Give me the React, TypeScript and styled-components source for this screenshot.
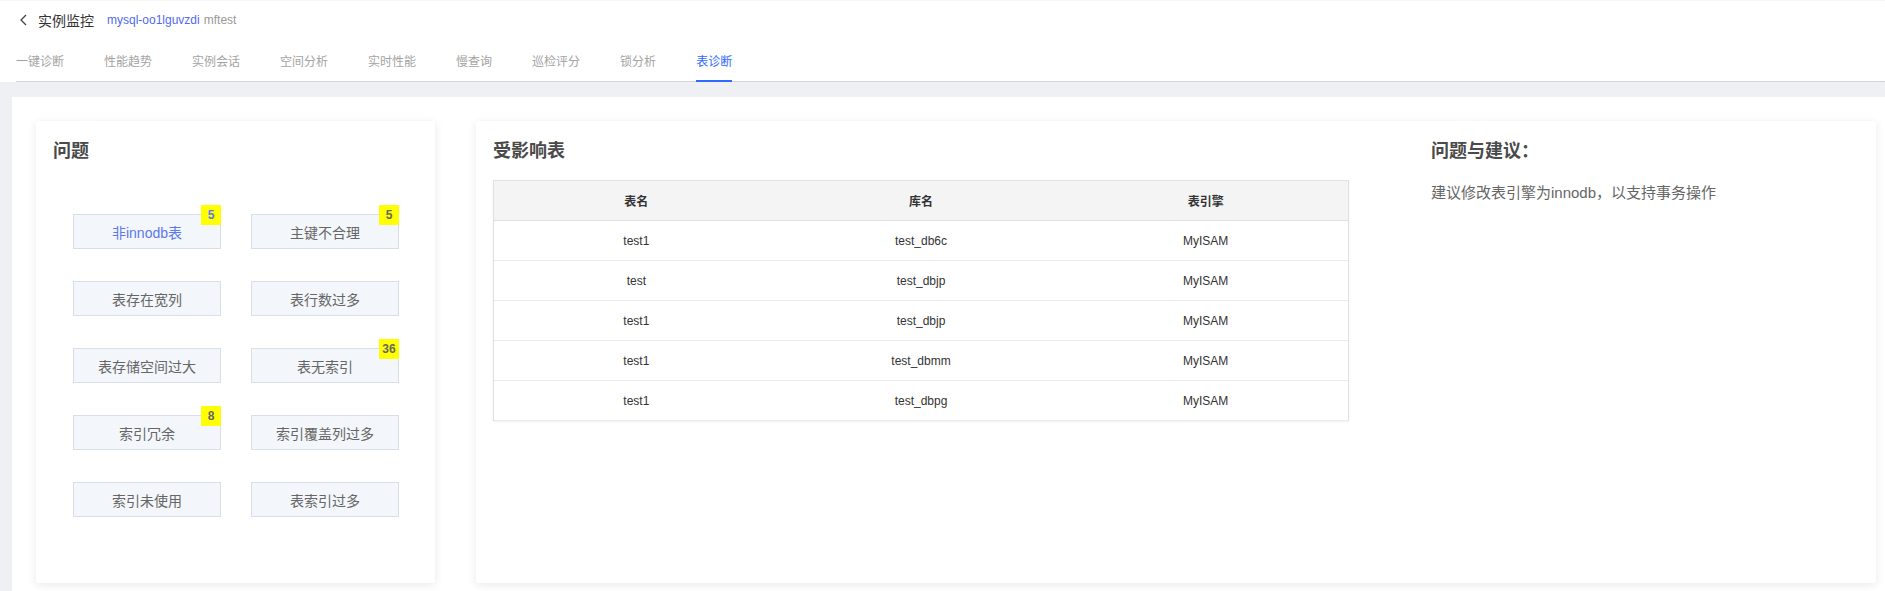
import React from "react";
import styled, { createGlobalStyle } from "styled-components";

const GlobalStyle = createGlobalStyle`
  html, body {
    margin: 0;
    padding: 0;
    background: #eef0f4;
    font-family: "Liberation Sans", Arial, "Noto Sans CJK SC", sans-serif;
  }
  * { box-sizing: border-box; }
`;

const Page = styled.div`
  width: 1885px;
  min-height: 591px;
  display: flex;
  flex-direction: column;
  background: #eef0f4;
`;

const Header = styled.header`
  background: #ffffff;
  box-shadow: inset 0 1px 1px rgba(0, 0, 0, 0.04);
`;

const TitleBar = styled.div`
  height: 40px;
  display: flex;
  align-items: center;
  padding-left: 19px;
`;

const BackButton = styled.span`
  display: inline-flex;
  width: 9px;
  height: 12px;
  margin-right: 10px;
  cursor: pointer;
`;

const PageTitle = styled.span`
  font-size: 14px;
  color: #333333;
  margin-right: 13px;
`;

const Instance = styled.span`
  font-size: 12px;
  color: #5469f2;
`;

const InstanceName = styled.span`
  font-size: 12px;
  color: #999999;
  margin-left: 4px;
`;

const TabBar = styled.nav`
  margin-left: 16px;
  height: 42px;
  display: flex;
  gap: 40px;
  border-bottom: 1px solid #d2d4d8;
`;

const Tab = styled.div<{ $active?: boolean }>`
  position: relative;
  height: 41px;
  display: flex;
  align-items: center;
  font-size: 12px;
  color: ${(p) => (p.$active ? "#2f6bff" : "#a3a3a3")};
  cursor: pointer;
  &::after {
    content: "";
    position: absolute;
    left: 0;
    right: 0;
    bottom: -1px;
    height: 2px;
    background: ${(p) => (p.$active ? "#2f6bff" : "transparent")};
  }
`;

const Content = styled.main`
  flex: 1;
  display: flex;
  padding: 15px 0 0 12px;
`;

const Panel = styled.section`
  flex: 1;
  background: #ffffff;
  display: flex;
  align-items: flex-start;
  gap: 41px;
  padding: 24px 9px 8px 24px;
`;

const Card = styled.div<{ $grow?: boolean }>`
  background: #ffffff;
  box-shadow: 0 2px 10px rgba(0, 0, 0, 0.09);
  border-radius: 2px;
  height: 462px;
  padding: 18px 17px;
  ${(p) => (p.$grow ? "flex: 1;" : "width: 399px;")}
`;

const CardTitle = styled.h2`
  margin: 0;
  font-size: 18px;
  line-height: 24px;
  font-weight: 700;
  color: #4a4a4a;
`;

const IssueGrid = styled.div`
  display: grid;
  grid-template-columns: repeat(2, 148px);
  grid-auto-rows: 35px;
  column-gap: 30px;
  row-gap: 32px;
  margin: 51px 0 0 20px;
`;

const IssueButton = styled.div<{ $active?: boolean }>`
  position: relative;
  display: flex;
  align-items: center;
  justify-content: center;
  background: #f3f6fa;
  border: 1px solid #d9dfe8;
  font-size: 14px;
  color: ${(p) => (p.$active ? "#5b78f0" : "#666666")};
  cursor: pointer;
`;

const Badge = styled.span`
  position: absolute;
  top: -10px;
  right: -1px;
  width: 20px;
  height: 20px;
  background: #ffff00;
  display: flex;
  align-items: center;
  justify-content: center;
  font-size: 12px;
  font-weight: 700;
`;

const Split = styled.div`
  display: flex;
  align-items: flex-start;
`;

const TableCol = styled.div`
  width: 856px;
`;

const Table = styled.div`
  margin-top: 17px;
  border: 1px solid #e1e1e1;
  border-bottom: none;
  box-shadow: 0 1px 2px rgba(0, 0, 0, 0.06);
`;

const Row = styled.div<{ $head?: boolean }>`
  display: grid;
  grid-template-columns: repeat(3, 1fr);
  height: 40px;
  border-bottom: 1px solid ${(p) => (p.$head ? "#e1e1e1" : "#ebebeb")};
  background: ${(p) => (p.$head ? "#f4f4f4" : "#ffffff")};
  font-size: 12px;
  font-weight: ${(p) => (p.$head ? 700 : 400)};
  color: #333333;
`;

const Cell = styled.div`
  display: flex;
  align-items: center;
  justify-content: center;
`;

const Advice = styled.div`
  margin-left: 82px;
`;

const AdviceText = styled.p`
  margin: 18px 0 0;
  font-size: 15px;
  line-height: 24px;
  color: #666666;
`;

const issues: { label: string; count?: number; active?: boolean }[] = [
  { label: "非innodb表", count: 5, active: true },
  { label: "主键不合理", count: 5 },
  { label: "表存在宽列" },
  { label: "表行数过多" },
  { label: "表存储空间过大" },
  { label: "表无索引", count: 36 },
  { label: "索引冗余", count: 8 },
  { label: "索引覆盖列过多" },
  { label: "索引未使用" },
  { label: "表索引过多" },
];

const tabs = ["一键诊断", "性能趋势", "实例会话", "空间分析", "实时性能", "慢查询", "巡检评分", "锁分析", "表诊断"];

const rows = [
  ["test1", "test_db6c", "MyISAM"],
  ["test", "test_dbjp", "MyISAM"],
  ["test1", "test_dbjp", "MyISAM"],
  ["test1", "test_dbmm", "MyISAM"],
  ["test1", "test_dbpg", "MyISAM"],
];

export default function App() {
  return (
    <>
      <GlobalStyle />
      <Page>
        <Header>
          <TitleBar>
            <BackButton>
              <svg width="9" height="12" viewBox="0 0 9 12">
                <polyline points="7,1 2,6 7,11" fill="none" stroke="#444" strokeWidth="1.3" />
              </svg>
            </BackButton>
            <PageTitle>实例监控</PageTitle>
            <Instance>mysql-oo1lguvzdi</Instance>
            <InstanceName>mftest</InstanceName>
          </TitleBar>
          <TabBar>
            {tabs.map((t) => (
              <Tab key={t} $active={t === "表诊断"}>
                {t}
              </Tab>
            ))}
          </TabBar>
        </Header>
        <Content>
          <Panel>
            <Card>
              <CardTitle>问题</CardTitle>
              <IssueGrid>
                {issues.map((it) => (
                  <IssueButton key={it.label} $active={it.active}>
                    {it.label}
                    {it.count !== undefined && <Badge>{it.count}</Badge>}
                  </IssueButton>
                ))}
              </IssueGrid>
            </Card>
            <Card $grow>
              <Split>
                <TableCol>
                  <CardTitle>受影响表</CardTitle>
                  <Table>
                    <Row $head>
                      <Cell>表名</Cell>
                      <Cell>库名</Cell>
                      <Cell>表引擎</Cell>
                    </Row>
                    {rows.map((r, i) => (
                      <Row key={i}>
                        {r.map((c, j) => (
                          <Cell key={j}>{c}</Cell>
                        ))}
                      </Row>
                    ))}
                  </Table>
                </TableCol>
                <Advice>
                  <CardTitle>问题与建议：</CardTitle>
                  <AdviceText>建议修改表引擎为innodb，以支持事务操作</AdviceText>
                </Advice>
              </Split>
            </Card>
          </Panel>
        </Content>
      </Page>
    </>
  );
}
